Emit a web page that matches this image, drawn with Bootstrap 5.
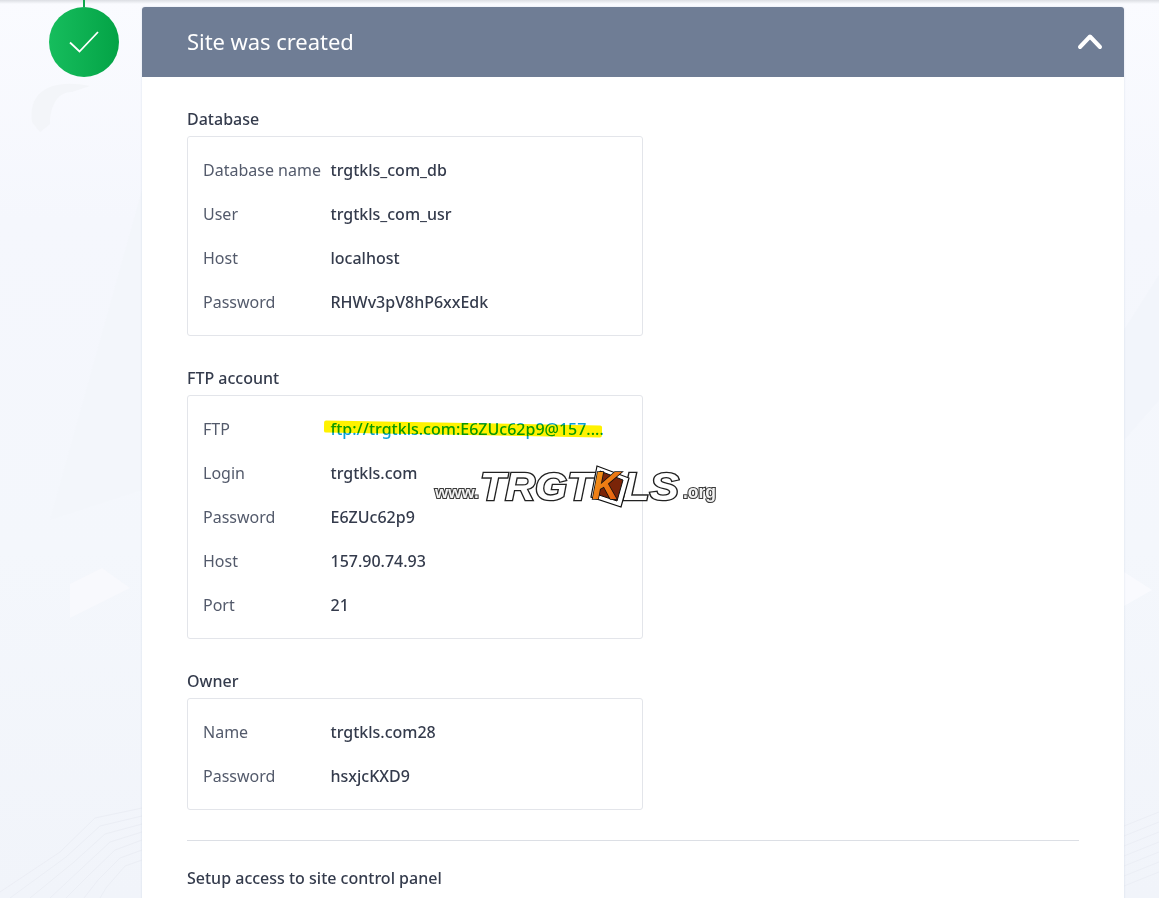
<!DOCTYPE html>
<html lang="en">
<head>
<meta charset="utf-8">
<title>Site was created</title>
<link href="https://cdn.jsdelivr.net/npm/bootstrap@5.3.0/dist/css/bootstrap.min.css" rel="stylesheet">
<style>
html,body{height:898px;overflow:hidden}
body{font-family:"Noto Sans","Open Sans",sans-serif;font-size:16px;color:#343b4c;background:linear-gradient(#fafbff 0,#f5f7fd 220px,#f4f7fc 550px,#f1f4fa 898px);position:relative}
.bg-art{position:absolute;inset:0;width:100%;height:100%;pointer-events:none}
.top-shade{height:4px;background:linear-gradient(#dcdee3,rgba(250,251,255,0));position:absolute;left:0;right:0;top:0}
.page-row{padding:7px 35px 0 49px;gap:23px;position:relative}
.step-col{width:70px;position:relative}
.step-line{position:absolute;left:34px;top:-7px;width:2px;height:7px;background:#0fa84c}
.step-dot{width:70px;height:70px;border-radius:50%;background:linear-gradient(90deg,#16bd5d,#04a346)}
.result-card{border:0;border-radius:3px 3px 0 0;box-shadow:0 0 2px rgba(120,135,170,.25);overflow:hidden;height:900px}
.result-head{height:70px;background:#6f7d95;color:#fff;padding:0 21px 0 45px}
.result-title{font-size:22px;font-weight:400;margin:0 0 2px;line-height:30px;letter-spacing:-.05px}
.result-body{padding:31px 45px 0}
.sec-title{font-size:16px;font-weight:500;line-height:22px;margin:0 0 6px;color:#343b4c}
.info-box{width:456px;border:1px solid #e3e5ea;border-radius:3px;padding:11px 15px;margin-bottom:31px}
.info-row{height:44px;line-height:44px;color:#343b4c;font-weight:500}
.info-key{width:127.500px;font-weight:400;color:#535a6b;flex:none}
.ftp-link{color:#0aa0d8;text-decoration:none;font-weight:500;white-space:nowrap}
.sep{margin:30px 0 26px;border:0;border-top:1px solid #dcdfe5;opacity:1}
.hl{position:absolute;left:324px;top:422.500px;width:278px;height:12px;background:#fff200;mix-blend-mode:multiply;transform:rotate(1deg);border-radius:2px}
.wm{position:absolute;left:435px;top:464px;width:282px;height:44px;font-family:"Liberation Sans",sans-serif;font-weight:700;white-space:nowrap}
.wm-part{position:absolute;color:#fff;line-height:1;paint-order:stroke fill;transform-origin:left top}
.wm-small{font-size:17px;top:20px;color:#f2f2f2;-webkit-text-stroke:2.200px #3a3a3a}
.wm-www{left:0}
.wm-org{left:248px;font-size:17.500px}
.wm-big{font-size:39px;top:3px;font-style:italic;-webkit-text-stroke:2.600px #222}
.wm-trgt{left:45px;transform:scaleX(1.060)}
.wm-ls{left:188px;transform:scaleX(1.120)}
.wm-k{position:absolute;left:155px;top:1px;width:40px;height:43px}
</style>
</head>
<body>
<svg class="bg-art" viewBox="0 0 1159 898" aria-hidden="true">
  <defs><linearGradient id="kfill" x1="0" y1="0" x2="1" y2="1"><stop offset="0" stop-color="#f7a11a"/><stop offset="1" stop-color="#e2500c"/></linearGradient></defs>
  <path d="M32 122C28 92 50 78 90 86L72 92C55 92 50 110 50 124L40 132z" fill="#f3f5f9"/>
  <path d="M142 190L50 520 142 490z" fill="#f3f6fb"/>
  <path d="M70 618V584L102 568 130 588z" fill="#f8f9fd"/>
  <path d="M1124 572L1152 590 1124 606z" fill="#f9fafe"/>
  <path d="M1124 330L1159 275V400L1124 440z" fill="#f2f5fb"/>
  <g fill="none" stroke="#ebeef5" stroke-width="1">
    <path d="M0 892L60 852 95 818 142 808"/><path d="M10 898L66 857 100 826 142 816"/><path d="M30 898L74 862 105 834 142 824"/><path d="M50 898L82 868 110 842 142 832"/><path d="M66 898L90 874 115 850 142 840"/><path d="M84 898L98 880 120 858 142 850"/><path d="M100 898L106 888 125 866 142 860"/>
    <path d="M1124 826L1159 812"/><path d="M1124 836L1159 822"/><path d="M1124 846L1159 832"/><path d="M1124 856L1159 842"/><path d="M1124 866L1159 852"/><path d="M1124 876L1159 862"/><path d="M1124 886L1159 872"/>
  </g>
</svg>
<div class="top-shade"></div>
<div class="page-row d-flex align-items-start">
  <div class="step-col flex-shrink-0">
    <div class="step-line"></div>
    <div class="step-dot d-flex align-items-center justify-content-center">
      <svg width="32" height="24" viewBox="0 0 32 24" fill="none"><path d="M2 12.500L11.500 21.500 30 2" stroke="#fff" stroke-width="1.800"/></svg>
    </div>
  </div>
  <div class="card result-card flex-grow-1">
    <div class="result-head d-flex align-items-center justify-content-between">
      <h2 class="result-title">Site was created</h2>
      <svg width="26" height="18" viewBox="0 0 26 18" fill="none"><path d="M3 14L13 3.500 23 14" stroke="#fff" stroke-width="4" stroke-linecap="round" stroke-linejoin="round"/></svg>
    </div>
    <div class="result-body">
      <h3 class="sec-title">Database</h3>
      <div class="info-box">
        <div class="info-row d-flex"><div class="info-key">Database name</div><div>trgtkls_com_db</div></div>
        <div class="info-row d-flex"><div class="info-key">User</div><div>trgtkls_com_usr</div></div>
        <div class="info-row d-flex"><div class="info-key">Host</div><div>localhost</div></div>
        <div class="info-row d-flex"><div class="info-key">Password</div><div>RHWv3pV8hP6xxEdk</div></div>
      </div>
      <h3 class="sec-title">FTP account</h3>
      <div class="info-box">
        <div class="info-row d-flex"><div class="info-key">FTP</div><a class="ftp-link" href="#">ftp://trgtkls.com:E6ZUc62p9@157....</a></div>
        <div class="info-row d-flex"><div class="info-key">Login</div><div>trgtkls.com</div></div>
        <div class="info-row d-flex"><div class="info-key">Password</div><div>E6ZUc62p9</div></div>
        <div class="info-row d-flex"><div class="info-key">Host</div><div>157.90.74.93</div></div>
        <div class="info-row d-flex"><div class="info-key">Port</div><div>21</div></div>
      </div>
      <h3 class="sec-title">Owner</h3>
      <div class="info-box mb-0">
        <div class="info-row d-flex"><div class="info-key">Name</div><div>trgtkls.com28</div></div>
        <div class="info-row d-flex"><div class="info-key">Password</div><div>hsxjcKXD9</div></div>
      </div>
      <hr class="sep">
      <h3 class="sec-title">Setup access to site control panel</h3>
    </div>
  </div>
</div>
<div class="hl"></div>
<div class="wm">
  <span class="wm-part wm-small wm-www">www.</span>
  <span class="wm-part wm-big wm-trgt">TRGT</span>
  <span class="wm-part wm-big wm-ls">LS</span>
  <svg class="wm-k" viewBox="0 0 40 43"><path d="M7 1L39 13 31 42 1 32z" fill="#fff" stroke="#111" stroke-width="1.200"/><path d="M10 6L33 15 27 36 6 29z" fill="#7a2408" stroke="#111" stroke-width="1"/><text x="2" y="34" font-size="38" font-weight="700" font-style="italic" font-family="Liberation Sans" fill="url(#kfill)" stroke="#111" stroke-width="1.600" paint-order="stroke fill">K</text></svg>
  <span class="wm-part wm-small wm-org">.org</span>
</div>
<script src="https://cdn.jsdelivr.net/npm/bootstrap@5.3.0/dist/js/bootstrap.bundle.min.js"></script>
</body>
</html>
